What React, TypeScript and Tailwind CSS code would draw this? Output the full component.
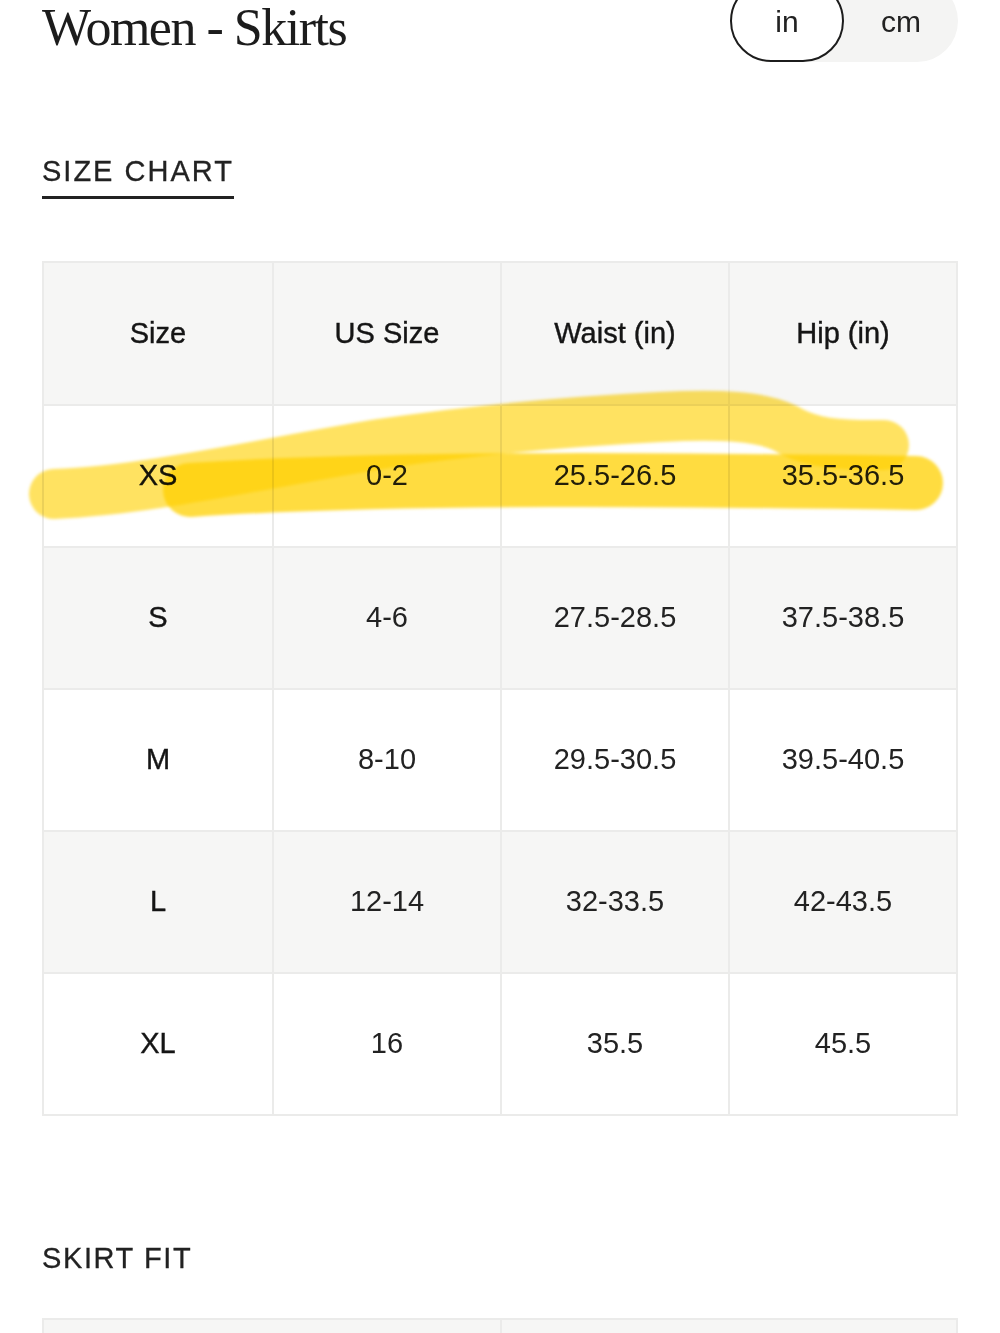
import React from "react";

type Row = {
  size: string;
  us: string;
  waist: string;
  hip: string;
};

const rows: Row[] = [
  { size: "XS", us: "0-2", waist: "25.5-26.5", hip: "35.5-36.5" },
  { size: "S", us: "4-6", waist: "27.5-28.5", hip: "37.5-38.5" },
  { size: "M", us: "8-10", waist: "29.5-30.5", hip: "39.5-40.5" },
  { size: "L", us: "12-14", waist: "32-33.5", hip: "42-43.5" },
  { size: "XL", us: "16", waist: "35.5", hip: "45.5" },
];

const sans = "font-['Liberation_Sans',Arial,sans-serif]";

function Cell({ children, first }: { children: React.ReactNode; first?: boolean }) {
  return (
    <div
      className={
        first
          ? "flex items-center justify-center"
          : "flex items-center justify-center border-l-2 border-[#ebebea]"
      }
    >
      {children}
    </div>
  );
}

// marker scribble over the XS row
function Highlight() {
  return (
    <svg
      className="pointer-events-none absolute left-0 top-0 mix-blend-multiply"
      width="1000"
      height="600"
      viewBox="0 0 1000 600"
    >
      <defs>
        <filter id="soft" filterUnits="userSpaceOnUse" x="0" y="300" width="1000" height="300">
          <feGaussianBlur stdDeviation="1.5" />
        </filter>
      </defs>
      <g filter="url(#soft)" fill="none" strokeLinecap="round" strokeLinejoin="round">
        <path
          d="M 54 494 C 150 490, 260 464, 380 444 C 460 432, 560 422, 660 417 C 720 414, 760 416, 785 428 C 805 440, 825 444, 860 445 L 884 445"
          stroke="#ffd000"
          strokeOpacity="0.62"
          strokeWidth="50"
        />
        <path
          d="M 190 490 C 400 476, 700 480, 916 483"
          stroke="#ffd000"
          strokeOpacity="0.75"
          strokeWidth="54"
        />
      </g>
    </svg>
  );
}

export default function App() {
  return (
    <main className={`relative min-h-screen overflow-hidden bg-white px-[42px] text-[#222] ${sans}`}>
      <div className="-mt-[20px] flex items-start justify-between">
        <h1 className="mt-[22px] font-['Liberation_Serif','Times_New_Roman',serif] text-[52px] leading-[52px] tracking-[-1.5px] text-[#1c1c1c]">
          Women - Skirts
        </h1>

        <div className="flex h-[82px] w-[228px] rounded-full bg-[#f4f4f3]">
          <div className="flex h-full w-[114px] items-center justify-center rounded-full border-2 border-[#1c1c1c] bg-white text-[30px] text-[#222]">
            in
          </div>
          <div className="flex flex-1 items-center justify-center text-[30px] text-[#222]">
            cm
          </div>
        </div>
      </div>

      <div className="mt-[95px]">
        <span className="inline-block border-b-[3px] border-[#222] pb-[10px] text-[29px] leading-[29px] tracking-[2px] [-webkit-text-stroke:0.3px_#222]">
          SIZE CHART
        </span>
      </div>

      <div className="mt-[62px] border-2 border-[#ebebea] text-[29px]">
        <div className="grid h-[141px] grid-cols-4 bg-[#f6f6f5] text-[#151515] [-webkit-text-stroke:0.4px_#151515]">
          <Cell first>Size</Cell>
          <Cell>US Size</Cell>
          <Cell>Waist (in)</Cell>
          <Cell>Hip (in)</Cell>
        </div>

        {rows.map((row, i) => (
          <div
            key={row.size}
            className={
              i % 2 === 0
                ? "grid h-[142px] grid-cols-4 border-t-2 border-[#ebebea] bg-white"
                : "grid h-[142px] grid-cols-4 border-t-2 border-[#ebebea] bg-[#f6f6f5]"
            }
          >
            <Cell first>
              <span className="text-[#151515] [-webkit-text-stroke:0.4px_#151515]">{row.size}</span>
            </Cell>
            <Cell>{row.us}</Cell>
            <Cell>{row.waist}</Cell>
            <Cell>{row.hip}</Cell>
          </div>
        ))}
      </div>

      <h2 className="mt-[128px] text-[29px] leading-[29px] tracking-[1.6px] [-webkit-text-stroke:0.3px_#222]">
        SKIRT FIT
      </h2>

      <div className="mt-[45px] grid h-[80px] grid-cols-2 border-2 border-[#ebebea] bg-[#f6f6f5]">
        <div />
        <div className="border-l-2 border-[#ebebea]" />
      </div>

      <Highlight />
    </main>
  );
}
